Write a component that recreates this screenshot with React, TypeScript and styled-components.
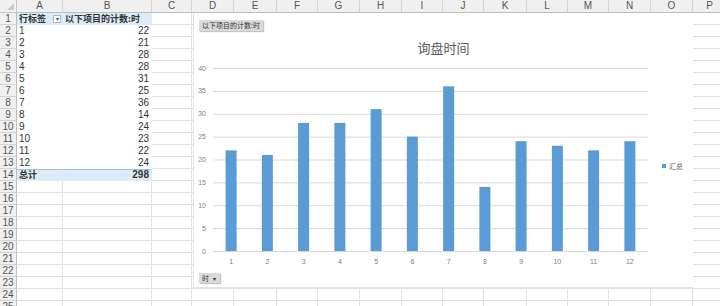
import styled, { createGlobalStyle } from 'styled-components';

const GlobalStyle = createGlobalStyle`
  body {
    margin: 0;
    background: #ffffff;
    font-family: 'Liberation Sans', 'Noto Sans CJK SC', sans-serif;
  }
`;

const columns = [
  { name: 'A', w: 46 },
  { name: 'B', w: 89 },
  { name: 'C', w: 40 },
  { name: 'D', w: 42 },
  { name: 'E', w: 43 },
  { name: 'F', w: 41 },
  { name: 'G', w: 42 },
  { name: 'H', w: 42 },
  { name: 'I', w: 41 },
  { name: 'J', w: 41 },
  { name: 'K', w: 43 },
  { name: 'L', w: 41 },
  { name: 'M', w: 41 },
  { name: 'N', w: 42 },
  { name: 'O', w: 42 },
  { name: 'P', w: 34 },
];

const values = [22, 21, 28, 28, 31, 25, 36, 14, 24, 23, 22, 24];
const ROWS = 25;

const App = () => {
  return (
    <Sheet>
      <GlobalStyle />
      <Row>
        <Corner />
        {columns.map((c) => (
          <ColHead key={c.name} $w={c.w}>
            {c.name}
          </ColHead>
        ))}
      </Row>
      {Array.from({ length: ROWS }).map((_, i) => {
        const r = i + 1;
        const isHead = r === 1;
        const isData = r >= 2 && r <= 13;
        const isTotal = r === 14;
        const inPivot = isHead || isData || isTotal;
        return (
          <Row key={r}>
            <RowHead>{r}</RowHead>
            <Cell $w={46} $pivot={inPivot} $bold={isHead || isTotal} $fill={isHead || isTotal} $total={isTotal}>
              {isHead && (
                <>
                  <Label>行标签</Label>
                  <DropButton>▾</DropButton>
                </>
              )}
              {isData && r - 1}
              {isTotal && <Label>总计</Label>}
            </Cell>
            <Cell $w={89} $pivot={inPivot} $bold={isHead || isTotal} $fill={isHead || isTotal} $total={isTotal} $right={!isHead}>
              {isHead && <Label>以下项目的计数:时</Label>}
              {isData && values[r - 2]}
              {isTotal && 298}
            </Cell>
            {columns.slice(2).map((c) => (
              <Cell key={c.name} $w={c.w} />
            ))}
          </Row>
        );
      })}
      <Chart>
        <FieldButton>以下项目的计数:时</FieldButton>
        <Title>询盘时间</Title>
        <ChartBody>
          <BarPlot />
          <Legend>
            <LegendKey />
            汇总
          </Legend>
        </ChartBody>
        <AxisButton>
          时 <Caret>▾</Caret>
        </AxisButton>
      </Chart>
    </Sheet>
  );
};

const BarPlot = () => {
  const left = 20;
  const right = 455;
  const top = 5;
  const bottom = 188;
  const max = 40;
  const step = (right - left) / values.length;
  const y = (v: number) => bottom - ((bottom - top) * v) / max;
  const ticks = [0, 5, 10, 15, 20, 25, 30, 35, 40];
  return (
    <svg width={460} height={205} viewBox="0 0 460 205">
      {ticks.map((t) => (
        <g key={t}>
          <line x1={left} x2={right} y1={y(t) + 0.5} y2={y(t) + 0.5} stroke="#d9d9d9" strokeWidth={1} />
          <text x={13} y={y(t) + 2.5} fontSize={7} fill="#7f7f7f" textAnchor="end" fontFamily="Liberation Sans, sans-serif">
            {t}
          </text>
        </g>
      ))}
      {values.map((v, i) => {
        const cx = left + step * (i + 0.5);
        return (
          <g key={i}>
            <rect x={cx - 5.5} y={y(v)} width={11} height={bottom - y(v)} fill="#5b9bd5" />
            <text x={cx} y={201} fontSize={7} fill="#7f7f7f" textAnchor="middle" fontFamily="Liberation Sans, sans-serif">
              {i + 1}
            </text>
          </g>
        );
      })}
    </svg>
  );
};

const Sheet = styled.div`
  position: relative;
  width: 720px;
  height: 306px;
  overflow: hidden;
  background: #ffffff;
`;

const Row = styled.div`
  display: flex;
  height: 12px;
  &:first-child {
    height: 13px;
  }
`;

const Corner = styled.div`
  position: relative;
  flex: 0 0 17px;
  box-sizing: border-box;
  background: #f0f0f0;
  border-right: 1px solid #c6c6c6;
  border-bottom: 1px solid #c6c6c6;
  &::after {
    content: '';
    position: absolute;
    right: 2px;
    bottom: 2px;
    border-style: solid;
    border-width: 0 0 7px 7px;
    border-color: transparent transparent #cccccc transparent;
  }
`;

const ColHead = styled.div<{ $w: number }>`
  flex: 0 0 ${(p) => p.$w}px;
  box-sizing: border-box;
  background: #f0f0f0;
  border-right: 1px solid #d4d4d4;
  border-bottom: 1px solid #bdbdbd;
  color: #555555;
  font-size: 10px;
  line-height: 12px;
  text-align: center;
`;

const RowHead = styled.div`
  flex: 0 0 17px;
  box-sizing: border-box;
  background: #f0f0f0;
  border-right: 1px solid #bdbdbd;
  border-bottom: 1px solid #d4d4d4;
  color: #555555;
  font-size: 10px;
  line-height: 11px;
  text-align: center;
`;

const Cell = styled.div<{
  $w: number;
  $pivot?: boolean;
  $bold?: boolean;
  $fill?: boolean;
  $total?: boolean;
  $right?: boolean;
}>`
  position: relative;
  flex: 0 0 ${(p) => p.$w}px;
  box-sizing: border-box;
  padding: 0 2px;
  border-right: 1px solid ${(p) => (p.$pivot ? 'transparent' : '#e0e0e0')};
  border-bottom: 1px solid ${(p) => (p.$pivot ? 'transparent' : '#e0e0e0')};
  border-top: ${(p) => (p.$total ? '1px solid #9bc2e6' : 'none')};
  background: ${(p) => (p.$fill ? '#ddebf7' : '#ffffff')};
  color: #333333;
  font-size: 10px;
  font-weight: ${(p) => (p.$bold ? 700 : 400)};
  line-height: ${(p) => (p.$total ? '10px' : '11px')};
  text-align: ${(p) => (p.$right ? 'right' : 'left')};
  white-space: nowrap;
`;

const Label = styled.span`
  font-family: 'Noto Sans CJK SC', sans-serif;
  font-size: 9px;
`;

const DropButton = styled.span`
  position: absolute;
  right: 1px;
  top: 2px;
  width: 8px;
  height: 8px;
  box-sizing: border-box;
  border: 1px solid #b5b5b5;
  background: #ffffff;
  color: #444444;
  font-size: 6px;
  font-weight: 400;
  line-height: 6px;
  text-align: center;
`;

const Chart = styled.div`
  position: absolute;
  left: 193px;
  top: 13px;
  width: 500px;
  height: 275px;
  box-sizing: border-box;
  background: #ffffff;
  border-left: 1px solid #e3e3e3;
  border-bottom: 1px solid #e3e3e3;
  display: flex;
  flex-direction: column;
  padding-top: 7px;
`;

const FieldButton = styled.div`
  align-self: flex-start;
  margin-left: 5px;
  height: 11px;
  width: 64px;
  box-sizing: border-box;
  background: #dadada;
  box-shadow: 1px 1px 1px #c4c4c4;
  color: #333333;
  font-family: 'Noto Sans CJK SC', sans-serif;
  font-size: 7px;
  line-height: 11px;
  padding-left: 3px;
  white-space: nowrap;
`;

const Title = styled.div`
  margin-top: 9px;
  height: 16px;
  text-align: center;
  color: #595959;
  font-family: 'Noto Sans CJK SC', sans-serif;
  font-size: 13px;
  line-height: 16px;
`;

const ChartBody = styled.div`
  margin-top: 7px;
  display: flex;
  align-items: center;
  gap: 9px;
  margin-left: -1px;
`;

const Legend = styled.div`
  display: flex;
  align-items: center;
  gap: 3px;
  color: #595959;
  font-family: 'Noto Sans CJK SC', sans-serif;
  font-size: 7px;
`;

const LegendKey = styled.span`
  width: 4px;
  height: 4px;
  background: #5b9bd5;
`;

const AxisButton = styled.div`
  align-self: flex-start;
  margin-top: 5px;
  margin-left: 5px;
  height: 10px;
  width: 21px;
  box-sizing: border-box;
  background: #dadada;
  box-shadow: 1px 1px 1px #c4c4c4;
  color: #333333;
  font-family: 'Noto Sans CJK SC', sans-serif;
  font-size: 7px;
  line-height: 10px;
  padding-left: 3px;
  white-space: nowrap;
`;

const Caret = styled.span`
  font-size: 6px;
  margin-left: 2px;
`;

export default App;
